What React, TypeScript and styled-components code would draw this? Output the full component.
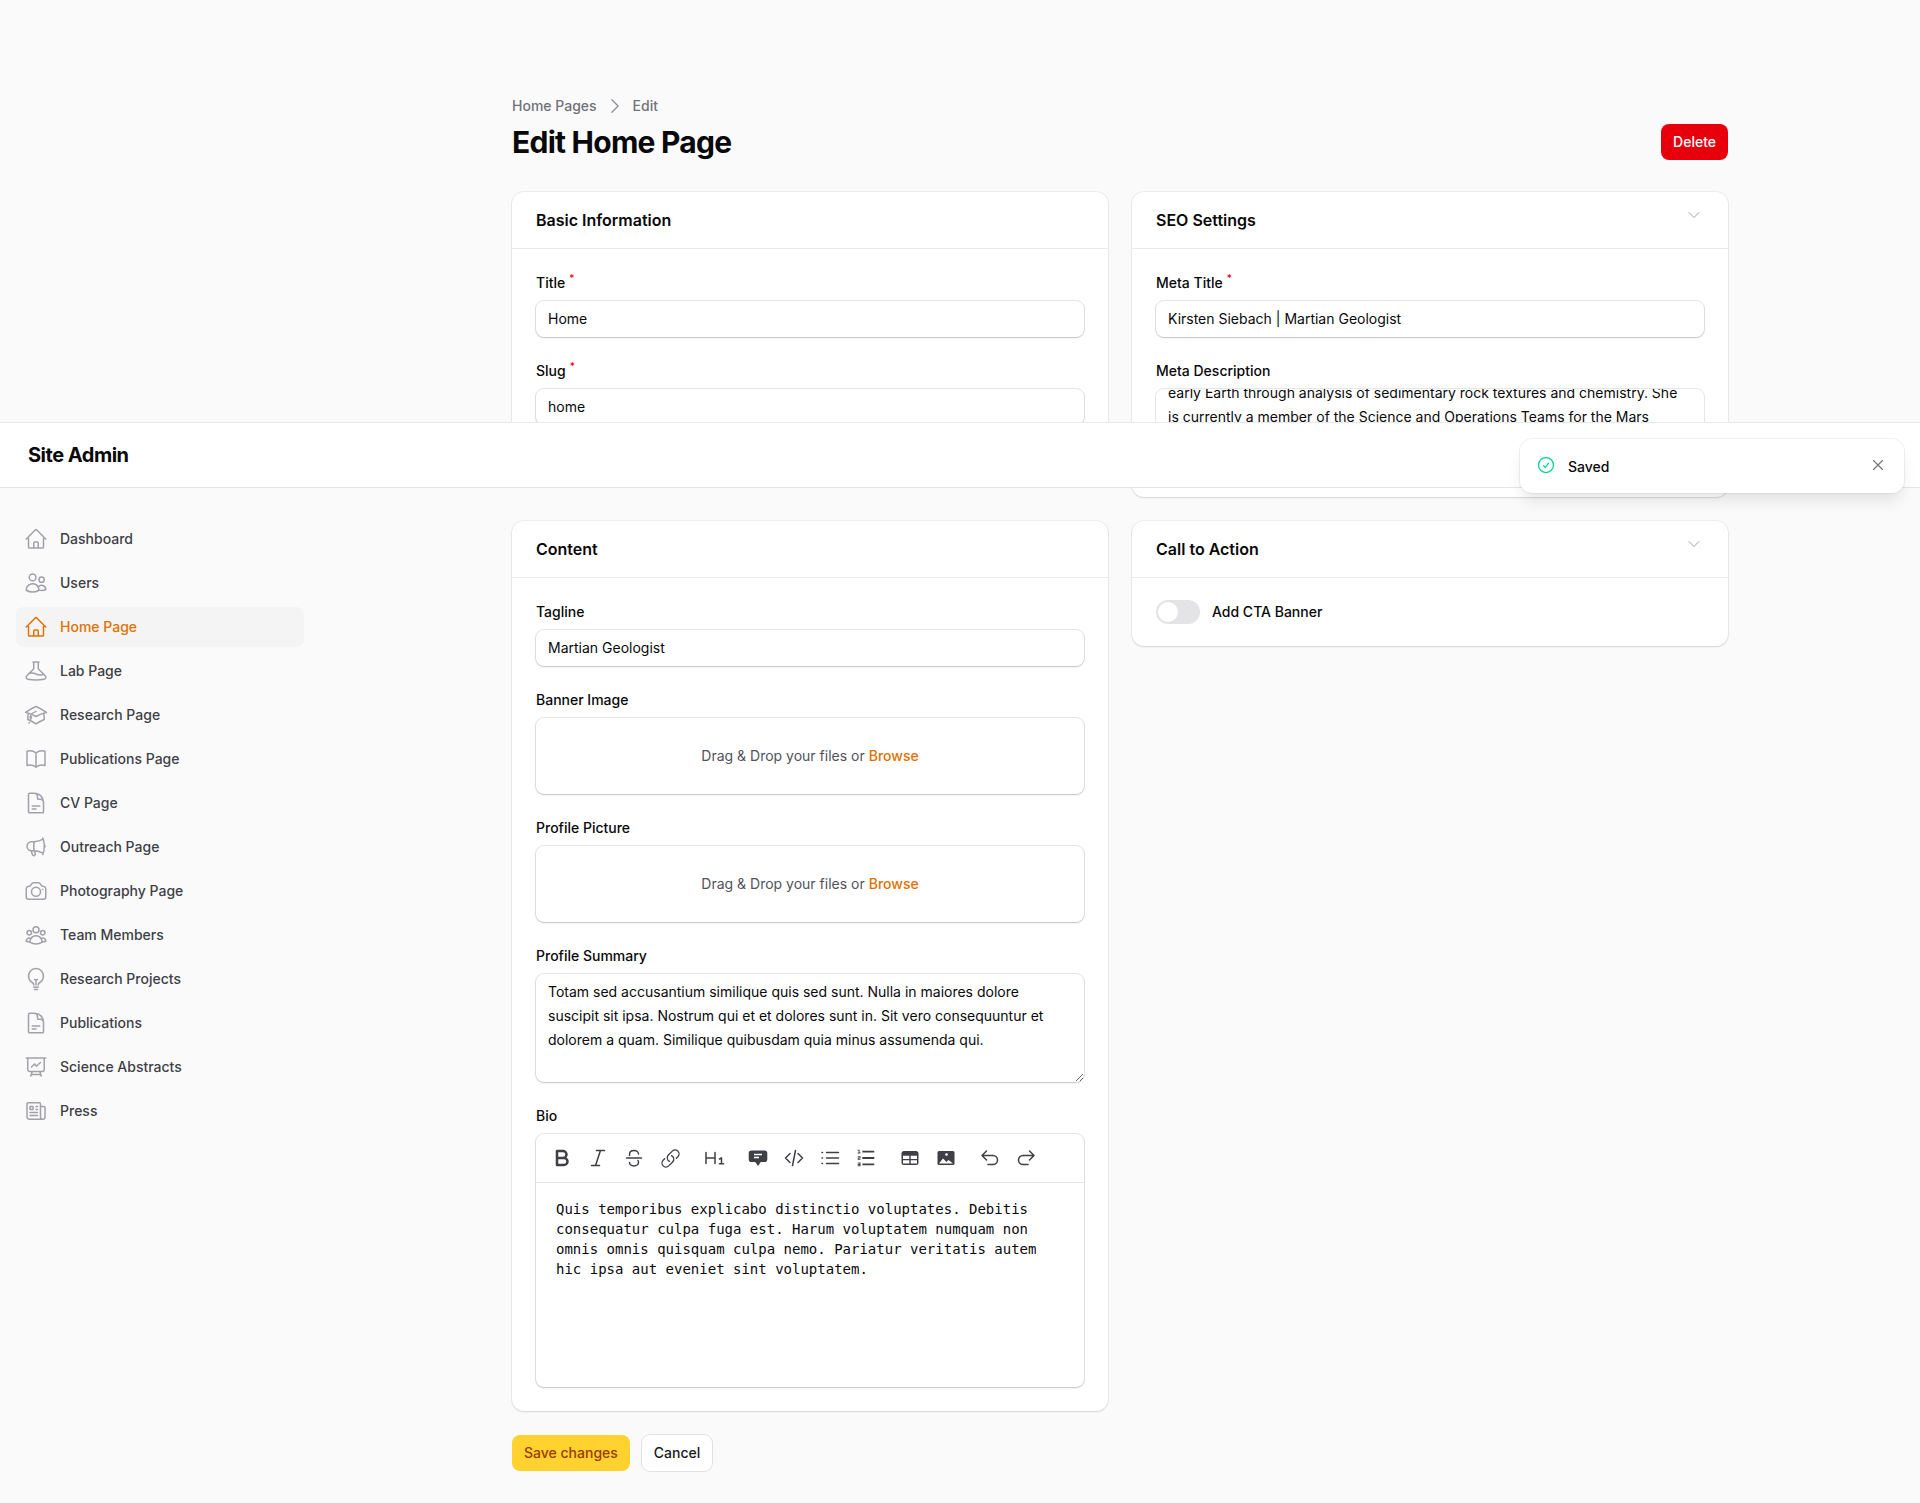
import React from 'react';
import styled, { createGlobalStyle } from 'styled-components';
import {
  HiOutlineHome,
  HiOutlineUsers,
  HiOutlineBeaker,
  HiOutlineAcademicCap,
  HiOutlineBookOpen,
  HiOutlineDocumentText,
  HiOutlineMegaphone,
  HiOutlineCamera,
  HiOutlineUserGroup,
  HiOutlineLightBulb,
  HiOutlinePresentationChartLine,
  HiOutlineNewspaper,
  HiOutlineChevronDown,
  HiOutlineChevronRight,
  HiOutlineCheckCircle,
  HiOutlineXMark,
  HiOutlineLink,
} from 'react-icons/hi2';
import { RiListOrdered } from 'react-icons/ri';

const navItems = [
  { label: 'Dashboard', icon: HiOutlineHome },
  { label: 'Users', icon: HiOutlineUsers },
  { label: 'Home Page', icon: HiOutlineHome, active: true },
  { label: 'Lab Page', icon: HiOutlineBeaker },
  { label: 'Research Page', icon: HiOutlineAcademicCap },
  { label: 'Publications Page', icon: HiOutlineBookOpen },
  { label: 'CV Page', icon: HiOutlineDocumentText },
  { label: 'Outreach Page', icon: HiOutlineMegaphone },
  { label: 'Photography Page', icon: HiOutlineCamera },
  { label: 'Team Members', icon: HiOutlineUserGroup },
  { label: 'Research Projects', icon: HiOutlineLightBulb },
  { label: 'Publications', icon: HiOutlineDocumentText },
  { label: 'Science Abstracts', icon: HiOutlinePresentationChartLine },
  { label: 'Press', icon: HiOutlineNewspaper },
];

// editor toolbar glyphs, drawn to match the markdown editor's own set
const StrokeIcon = ({ d, width = 1.5 }: { d: string; width?: number }) => (
  <svg width={24} height={24} viewBox="0 0 24 24" fill="none" stroke="currentColor" strokeWidth={width} strokeLinecap="round" strokeLinejoin="round">
    <path d={d} />
  </svg>
);

const BoldIcon = () => <StrokeIcon width={2.5} d="M7 5h6a3.5 3.5 0 0 1 0 7H7z M7 12h7a3.5 3.5 0 0 1 0 7H7z" />;
const ItalicIcon = () => <StrokeIcon d="M10.5 4.5h8 M5.5 19.5h8 M14.5 4.5l-5 15" />;
const StrikeIcon = () => (
  <StrokeIcon d="M4.5 12h15 M7.5 9.5V8.5C7.5 6 9.5 4.5 12 4.5s4.5 1.5 4.5 3.5 M7.5 16.5c0 2 2 3.5 4.5 3.5s4.5-1.5 4.5-3.5c0-.8-.2-1.4-.5-2" />
);
const HeadingIcon = () => <StrokeIcon d="M4 6.5v11 M13 6.5v11 M4 12h9 M17.5 13l2-1.2v6 M17.5 17.8h4" />;
const CommentIcon = () => (
  <svg width={24} height={24} viewBox="0 0 24 24">
    <path fill="currentColor" d="M5.5 4.5h13a2.8 2.8 0 0 1 2.8 2.8v6a2.8 2.8 0 0 1-2.8 2.8h-3.7L12 20l-2.800-3.900H5.500a2.800 2.800 0 0 1-2.800-2.800v-6a2.800 2.800 0 0 1 2.800-2.800z" />
    <path fill="none" stroke="#fff" strokeWidth={1.5} d="M8 8.500h8 M8 11.500h5" />
  </svg>
);
const CodeIcon = () => <StrokeIcon d="M8 7.500L3.500 12 8 16.500 M16 7.500l4.500 4.500-4.500 4.500 M13.500 4.500l-3 15" />;
const BulletIcon = () => <StrokeIcon d="M8.500 6.500h12 M8.500 12h12 M8.500 17.500h12 M4 6.500h.5 M4 12h.5 M4 17.500h.5" />;
const TableIcon = () => (
  <svg width={24} height={24} viewBox="0 0 24 24">
    <rect x="3.500" y="5" width="17" height="14" rx="2.500" fill="currentColor" />
    <path fill="#fff" d="M5 9.800h6.300v3.300H5z M12.700 9.800H19v3.300h-6.300z M5 14.300h6.300v3.300H5z M12.700 14.300H19v3.300h-6.300z" />
  </svg>
);
const ImageIcon = () => (
  <svg width={24} height={24} viewBox="0 0 24 24">
    <rect x="3.500" y="5" width="17" height="14" rx="1.500" fill="currentColor" />
    <circle cx="12.500" cy="8.500" r="1.300" fill="#fff" />
    <path fill="#fff" d="M5 17.500l4-5 3.500 3.500 2-2 4.500 3.500z" />
  </svg>
);
const UndoIcon = () => <StrokeIcon d="M8.500 5L4 9.500 8.500 14 M4 9.500h11a4.500 4.500 0 0 1 0 9h-5" />;
const RedoIcon = () => <StrokeIcon d="M15.500 5L20 9.500 15.500 14 M20 9.500H9a4.500 4.500 0 0 0 0 9h5" />;
const LinkIcon = () => <HiOutlineLink size={21} />;
const OrderedIcon = () => <RiListOrdered size={22} />;

const toolbarGroups = [
  [BoldIcon, ItalicIcon, StrikeIcon, LinkIcon],
  [HeadingIcon],
  [CommentIcon, CodeIcon, BulletIcon, OrderedIcon],
  [TableIcon, ImageIcon],
  [UndoIcon, RedoIcon],
];

const App = () => (
  <>
    <GlobalStyle />
    <TopBar>
      <Brand>Site Admin</Brand>
    </TopBar>
    <Toast>
      <ToastIcon>
        <HiOutlineCheckCircle size={20} color="#00d492" />
      </ToastIcon>
      <ToastText>Saved</ToastText>
      <ToastClose>
        <HiOutlineXMark size={18} />
      </ToastClose>
    </Toast>
    <Shell>
      <Sidebar>
        {navItems.map(({ label, icon: Icon, active }) => (
          <NavItem key={label} $active={active}>
            <Icon size={24} />
            {label}
          </NavItem>
        ))}
      </Sidebar>
      <Main>
        <Breadcrumbs>
          <span>Home Pages</span>
          <HiOutlineChevronRight size={20} />
          <span>Edit</span>
        </Breadcrumbs>
        <Heading>
          <Title>Edit Home Page</Title>
          <DeleteButton>Delete</DeleteButton>
        </Heading>
        <Columns>
          <Card>
            <CardHeader>
              <CardTitle>Basic Information</CardTitle>
            </CardHeader>
            <CardBody>
              <Field>
                <Label>
                  Title<Req>*</Req>
                </Label>
                <Input>Home</Input>
              </Field>
              <Field>
                <Label>
                  Slug<Req>*</Req>
                </Label>
                <Input>home</Input>
              </Field>
            </CardBody>
          </Card>
          <TallCard>
            <CardHeader>
              <CardTitle>SEO Settings</CardTitle>
              <Chevron>
                <HiOutlineChevronDown size={16} />
              </Chevron>
            </CardHeader>
            <CardBody>
              <Field>
                <Label>
                  Meta Title<Req>*</Req>
                </Label>
                <Input>Kirsten Siebach | Martian Geologist</Input>
              </Field>
              <Field>
                <Label>Meta Description</Label>
                <ClippedArea>
                  <ClippedText>
                    early Earth through analysis of sedimentary rock textures and chemistry. She is
                    currently a member of the Science and Operations Teams for the Mars
                  </ClippedText>
                </ClippedArea>
              </Field>
            </CardBody>
          </TallCard>
          <Card>
            <CardHeader>
              <CardTitle>Content</CardTitle>
            </CardHeader>
            <CardBody>
              <Field>
                <Label>Tagline</Label>
                <Input>Martian Geologist</Input>
              </Field>
              <Field>
                <Label>Banner Image</Label>
                <Dropzone>
                  Drag &amp; Drop your files or <Browse>Browse</Browse>
                </Dropzone>
              </Field>
              <Field>
                <Label>Profile Picture</Label>
                <Dropzone>
                  Drag &amp; Drop your files or <Browse>Browse</Browse>
                </Dropzone>
              </Field>
              <Field>
                <Label>Profile Summary</Label>
                <TextArea
                  readOnly
                  defaultValue="Totam sed accusantium similique quis sed sunt. Nulla in maiores dolore suscipit sit ipsa. Nostrum qui et et dolores sunt in. Sit vero consequuntur et dolorem a quam. Similique quibusdam quia minus assumenda qui."
                />
              </Field>
              <Field>
                <Label>Bio</Label>
                <Editor>
                  <Toolbar>
                    {toolbarGroups.map((group, i) => (
                      <ToolGroup key={i}>
                        {group.map((Tool, j) => (
                          <ToolButton key={j}>
                            <Tool />
                          </ToolButton>
                        ))}
                      </ToolGroup>
                    ))}
                  </Toolbar>
                  <EditorText>
                    Quis temporibus explicabo distinctio voluptates. Debitis consequatur culpa fuga
                    est. Harum voluptatem numquam non omnis omnis quisquam culpa nemo. Pariatur
                    veritatis autem hic ipsa aut eveniet sint voluptatem.
                  </EditorText>
                </Editor>
              </Field>
            </CardBody>
          </Card>
          <Card>
            <CardHeader>
              <CardTitle>Call to Action</CardTitle>
              <Chevron>
                <HiOutlineChevronDown size={16} />
              </Chevron>
            </CardHeader>
            <ToggleRow>
              <Toggle>
                <Knob />
              </Toggle>
              <Label>Add CTA Banner</Label>
            </ToggleRow>
          </Card>
        </Columns>
        <Actions>
          <SaveButton>Save changes</SaveButton>
          <CancelButton>Cancel</CancelButton>
        </Actions>
      </Main>
    </Shell>
  </>
);

const GlobalStyle = createGlobalStyle`
  * { box-sizing: border-box; }
  html, body { margin: 0; padding: 0; }
  body {
    background: #fafafa;
    color: #09090b;
    font-family: Inter, "Liberation Sans", sans-serif;
    font-size: 14px;
    line-height: 20px;
  }
`;

const TopBar = styled.header`
  position: absolute;
  top: 422px;
  left: 0;
  right: 0;
  z-index: 10;
  height: 66px;
  display: flex;
  align-items: center;
  padding: 0 28px;
  background: #fff;
  border-top: 1px solid #e9e9eb;
  border-bottom: 1px solid #e4e4e7;
`;

const Brand = styled.div`
  font-size: 20px;
  line-height: 28px;
  font-weight: 700;
  letter-spacing: -0.5px;
`;

const Toast = styled.div`
  position: absolute;
  top: 439px;
  left: 1520px;
  z-index: 20;
  width: 384px;
  height: 54px;
  display: flex;
  align-items: center;
  gap: 12px;
  padding: 0 16px;
  background: #fff;
  border-radius: 12px;
  box-shadow: 0 10px 15px -3px rgba(0, 0, 0, 0.1), 0 0 0 1px rgba(9, 9, 11, 0.05);
`;

const ToastIcon = styled.div`
  display: flex;
  margin-top: -2px;
`;

const ToastText = styled.div`
  flex: 1;
  font-weight: 500;
  padding-top: 2px;
`;

const ToastClose = styled.div`
  display: flex;
  margin: -2px 1px 0 0;
  color: #71717a;
`;

const Shell = styled.div`
  display: flex;
  min-height: 1503px;
`;

const Sidebar = styled.nav`
  width: 320px;
  flex-shrink: 0;
  padding: 519px 16px 0;
  display: flex;
  flex-direction: column;
  gap: 4px;
`;

const NavItem = styled.a<{ $active?: boolean }>`
  width: 288px;
  height: 40px;
  display: flex;
  align-items: center;
  gap: 12px;
  padding: 0 8px;
  border-radius: 8px;
  font-weight: 500;
  color: ${(p) => (p.$active ? '#e17100' : '#3f3f46')};
  background: ${(p) => (p.$active ? '#f4f4f5' : 'transparent')};

  svg {
    color: ${(p) => (p.$active ? '#e17100' : '#a1a1aa')};
    flex-shrink: 0;
  }
`;

const Main = styled.main`
  flex: 1;
  max-width: 1280px;
  margin: 0 auto;
  padding: 96px 32px 0;
`;

const Breadcrumbs = styled.div`
  display: flex;
  align-items: center;
  gap: 8px;
  height: 20px;
  font-weight: 500;
  color: #71717a;

  svg {
    color: #8f8f98;
  }
`;

const Heading = styled.div`
  display: flex;
  align-items: center;
  justify-content: space-between;
  margin-top: 8px;
  margin-bottom: 32px;
`;

const Title = styled.h1`
  margin: 0;
  font-size: 30px;
  line-height: 36px;
  font-weight: 700;
  letter-spacing: -0.75px;
`;

const BaseButton = styled.button`
  height: 36px;
  padding: 0 12px;
  border: none;
  border-radius: 8px;
  font: inherit;
  font-weight: 500;
`;

const DeleteButton = styled(BaseButton)`
  background: #e7000b;
  color: #fff;
`;

const Columns = styled.div`
  display: grid;
  grid-template-columns: 596px 596px;
  grid-template-rows: 305px auto;
  column-gap: 24px;
  row-gap: 24px;
  align-items: start;
`;

const Card = styled.section`
  background: #fff;
  border-radius: 12px;
  box-shadow: 0 1px 2px rgba(0, 0, 0, 0.1), 0 0 0 1px rgba(9, 9, 11, 0.05);
  overflow: hidden;
`;

const TallCard = styled(Card)`
  height: 100%;
`;

const CardHeader = styled.div`
  height: 57px;
  display: flex;
  justify-content: space-between;
  padding: 16px 24px;
  border-bottom: 1px solid #e9e9eb;
`;

const CardTitle = styled.h3`
  margin: 0;
  font-size: 16px;
  line-height: 24px;
  font-weight: 600;
`;

const Chevron = styled.div`
  display: flex;
  height: 16px;
  margin: -1px 2px 0 0;
  color: #a1a1aa;
`;

const CardBody = styled.div`
  padding: 24px;
  display: flex;
  flex-direction: column;
  gap: 24px;
`;

const Field = styled.div`
  display: flex;
  flex-direction: column;
  gap: 8px;
`;

const Label = styled.label`
  font-weight: 500;
`;

const Req = styled.sup`
  margin-left: 4px;
  color: #e7000b;
  font-size: 10px;
  line-height: 0;
`;

const Input = styled.div`
  height: 36px;
  padding: 8px 12px;
  border-radius: 8px;
  background: #fff;
  box-shadow: 0 1px 2px rgba(0, 0, 0, 0.15), 0 0 0 1px rgba(9, 9, 11, 0.1);
`;

const ClippedArea = styled.div`
  height: 80px;
  padding: 0 20px 0 12px;
  overflow: hidden;
  border-radius: 8px;
  box-shadow: 0 0 0 1px rgba(9, 9, 11, 0.1);
`;

const ClippedText = styled.div`
  margin-top: -8px;
  line-height: 24px;
`;

const Dropzone = styled.div`
  height: 76px;
  display: flex;
  align-items: center;
  justify-content: center;
  gap: 4px;
  border-radius: 8px;
  color: #52525b;
  box-shadow: 0 1px 2px rgba(0, 0, 0, 0.15), 0 0 0 1px rgba(9, 9, 11, 0.1);
`;

const Browse = styled.span`
  color: #e17100;
  font-weight: 500;
`;

const TextArea = styled.textarea`
  display: block;
  width: 100%;
  height: 108px;
  padding: 6px 12px;
  border: none;
  outline: none;
  font: inherit;
  line-height: 24px;
  color: inherit;
  border-radius: 8px;
  box-shadow: 0 1px 2px rgba(0, 0, 0, 0.15), 0 0 0 1px rgba(9, 9, 11, 0.1);
`;

const Editor = styled.div`
  height: 253px;
  border-radius: 8px;
  box-shadow: 0 1px 2px rgba(0, 0, 0, 0.15), 0 0 0 1px rgba(9, 9, 11, 0.1);
`;

const Toolbar = styled.div`
  height: 49px;
  display: flex;
  align-items: center;
  gap: 8px;
  padding: 0 8px;
  border-bottom: 1px solid #e4e4e7;
  color: #3f3f46;
`;

const ToolGroup = styled.div`
  display: flex;
`;

const ToolButton = styled.span`
  width: 36px;
  height: 24px;
  display: flex;
  align-items: center;
  justify-content: center;
`;

const EditorText = styled.div`
  padding: 16px 20px;
  font-family: "DejaVu Sans Mono", monospace;
  font-size: 14px;
`;

const ToggleRow = styled.div`
  display: flex;
  align-items: center;
  gap: 12px;
  padding: 22px 24px;
`;

const Toggle = styled.div`
  width: 44px;
  height: 24px;
  padding: 2px;
  background: #e4e4e7;
  border-radius: 12px;
`;

const Knob = styled.div`
  width: 20px;
  height: 20px;
  background: #fff;
  border-radius: 50%;
`;

const Actions = styled.div`
  display: flex;
  gap: 12px;
  margin-top: 24px;
`;

const SaveButton = styled(BaseButton)`
  background: #ffd230;
  color: #973c00;
`;

const CancelButton = styled(BaseButton)`
  background: #fff;
  color: #18181b;
  box-shadow: 0 0 0 1px rgba(9, 9, 11, 0.1);
`;

export default App;
